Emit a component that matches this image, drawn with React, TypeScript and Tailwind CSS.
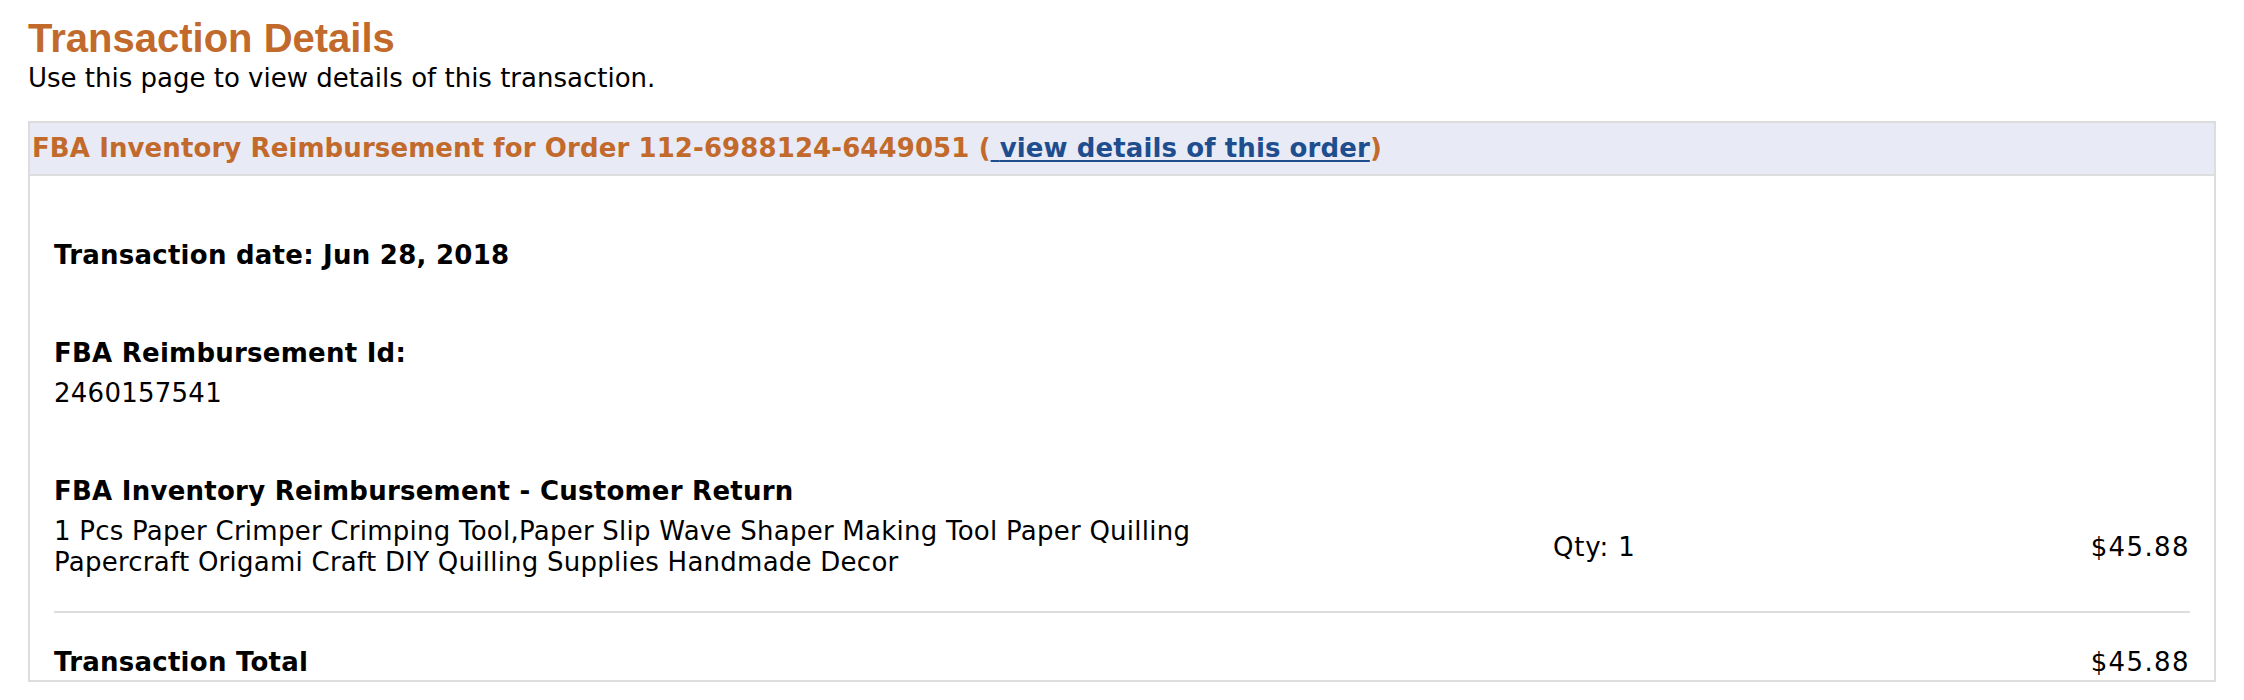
const body = { fontFamily: '"DejaVu Sans", Verdana, sans-serif' };
const heading = { fontFamily: '"Liberation Sans", Arial, sans-serif' };

function ItemRow() {
  return (
    <div className="flex items-center">
      <div className="w-[1499px] shrink-0 text-[26px] leading-[31px]">
        <span className="block whitespace-nowrap">
          1 Pcs Paper Crimper Crimping Tool,Paper Slip Wave Shaper Making Tool Paper Quilling
        </span>
        <span className="block whitespace-nowrap">
          Papercraft Origami Craft DIY Quilling Supplies Handmade Decor
        </span>
      </div>
      <div className="flex-1 text-[26px] leading-[30px] tracking-[0.8px]">Qty: 1</div>
      <div className="text-[26px] leading-[30px] text-right tracking-[1.4px]">$45.88</div>
    </div>
  );
}

export default function App() {
  return (
    <div className="min-h-[700px] bg-white px-[28px] pt-[14px] text-black" style={body}>
      {/* Page title */}
      <h1 className="text-[40px] leading-[48px] font-bold text-[#c26a2c]" style={heading}>
        Transaction Details
      </h1>
      <p className="text-[26px] leading-[32px]">Use this page to view details of this transaction.</p>

      {/* Transaction box */}
      <div className="mt-[27px] border-2 border-[#dddddd] tracking-[0.25px]">
        <div className="h-[51px] bg-[#e8eaf6] pl-[2px] text-[26px] leading-[51px] font-bold text-[#c26a2c] whitespace-nowrap tracking-[0.1px]">
          FBA Inventory Reimbursement for Order 112-6988124-6449051 (
          <a href="#" className="text-[#1e4e8e] underline underline-offset-[3px] decoration-2">
            {' '}view details of this order
          </a>
          )
        </div>

        <div className="border-t-2 border-[#dddddd] px-[24px] pt-[64px] pb-[3px]">
          <div className="text-[26px] leading-[30px] font-bold">Transaction date: Jun 28, 2018</div>

          <div className="mt-[68px] text-[26px] leading-[30px] font-bold">FBA Reimbursement Id:</div>
          <div className="mt-[10px] text-[26px] leading-[30px]">2460157541</div>

          <div className="mt-[68px] text-[26px] leading-[30px] font-bold">
            FBA Inventory Reimbursement - Customer Return
          </div>
          <div className="mt-[10px]">
            <ItemRow />
          </div>

          <div className="mt-[33px] border-t-2 border-[#dddddd]" />

          <div className="mt-[34px] flex justify-between text-[26px] leading-[30px]">
            <span className="font-bold">Transaction Total</span>
            <span className="tracking-[1.4px]">$45.88</span>
          </div>
        </div>
      </div>
    </div>
  );
}
